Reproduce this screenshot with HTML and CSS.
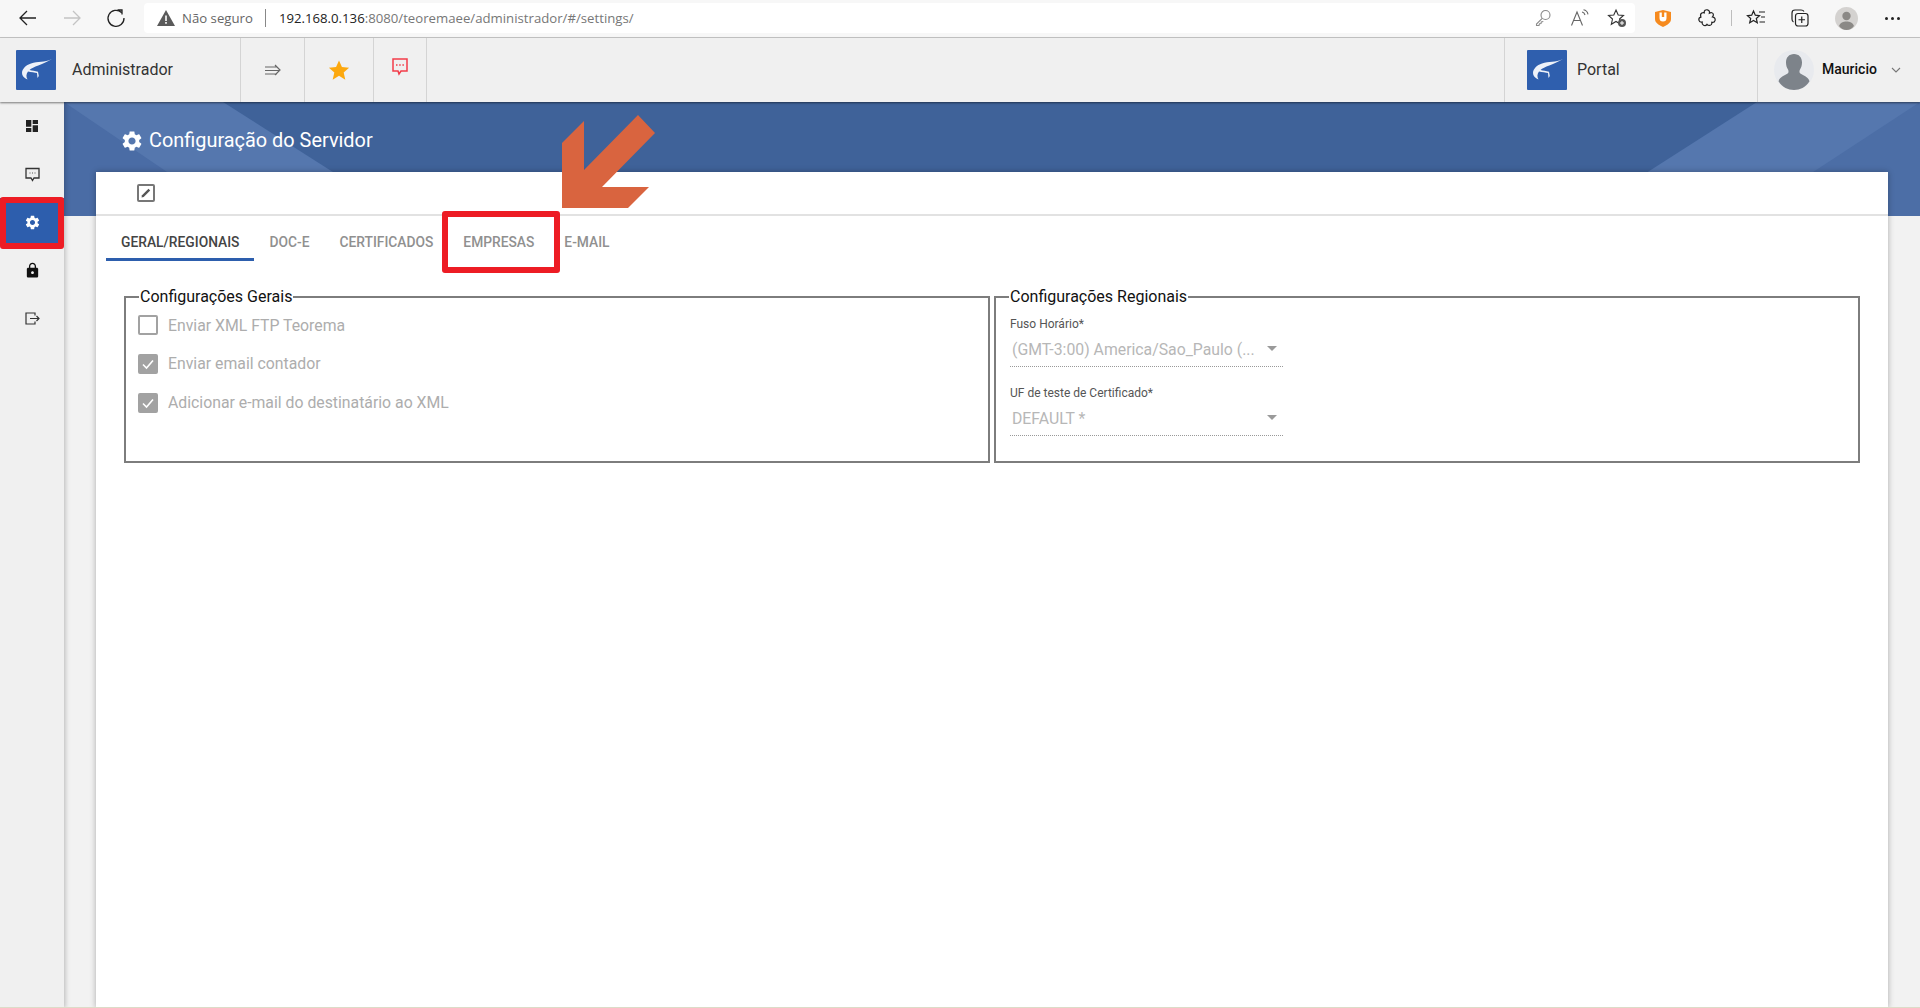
FILE: index.html
```html
<!DOCTYPE html>
<html lang="pt-BR">
<head>
<meta charset="utf-8">
<title>Configuração do Servidor</title>
<link rel="stylesheet" href="styles.css">
</head>
<body>
<svg class="defs" width="0" height="0" aria-hidden="true">
  <symbol id="logo" viewBox="0 0 40 40">
    <rect width="40" height="40" rx="1" fill="#2f5fae"/>
    <path d="M36 9C28 13 22 11 15 13.500C10 15 6 19 6 23C6 26 8 28 11.500 29.500C10 27 10 24 12 21.500C15 22 19 22.500 21 23L21.500 28L22.800 26L22 21.800C19 21 16 20.500 13.500 20C17 16.500 26 15 36 9Z" fill="#fff" opacity=".92"/>
  </symbol>
  <symbol id="gear" viewBox="0 0 24 24">
    <path d="M19.140 12.940c.04-.3.06-.61.06-.94 0-.32-.02-.64-.07-.94l2.030-1.580c.18-.14.23-.41.12-.61l-1.920-3.320c-.12-.22-.37-.29-.59-.22l-2.390.96c-.5-.38-1.030-.7-1.620-.94l-.36-2.540c-.04-.24-.24-.41-.48-.41h-3.840c-.24 0-.43.17-.47.41l-.36 2.540c-.59.24-1.130.57-1.620.94l-2.390-.96c-.22-.08-.47 0-.59.22L2.740 8.870c-.12.21-.08.47.12.61l2.030 1.580c-.05.3-.09.63-.09.94s.02.64.07.94l-2.030 1.580c-.18.14-.23.41-.12.61l1.920 3.320c.12.22.37.29.59.22l2.390-.96c.5.38 1.030.7 1.620.94l.36 2.540c.05.24.24.41.48.41h3.840c.24 0 .44-.17.47-.41l.36-2.540c.59-.24 1.130-.56 1.620-.94l2.390.96c.22.08.47 0 .59-.22l1.920-3.320c.12-.22.07-.47-.12-.61l-2.010-1.580zM12 15.600c-1.980 0-3.600-1.620-3.600-3.600s1.620-3.600 3.600-3.600 3.600 1.620 3.600 3.600-1.620 3.600-3.600 3.600z" fill="currentColor"/>
  </symbol>
</svg>

<header class="browser">
  <nav class="browser-nav">
    <span class="bbtn"><svg width="20" height="20" viewBox="0 0 20 20" fill="none" stroke="#222" stroke-width="1.300"><path d="M18 10H2M9 3l-7 7 7 7"/></svg></span>
    <span class="bbtn"><svg width="20" height="20" viewBox="0 0 20 20" fill="none" stroke="#c4c4c4" stroke-width="1.300"><path d="M2 10h16M11 3l7 7-7 7"/></svg></span>
    <span class="bbtn"><svg width="20" height="20" viewBox="0 0 20 20" fill="none" stroke="#222" stroke-width="1.300"><path d="M15.500 4.500A8 8 0 1 0 18 10M11.500 2h4.500v4.500"/></svg></span>
  </nav>
  <div class="address">
    <svg class="warn" width="18" height="16" viewBox="0 0 18 16"><path d="M9 0l9 16H0z" fill="#5a5a5a"/><path d="M8.200 5.500h1.600v5.500H8.200zM8.200 12h1.600v1.700H8.200z" fill="#fff"/></svg>
    <span class="insecure">Não seguro</span>
    <span class="addr-sep"></span>
    <span class="url"><b>192.168.0.136</b>:8080/teoremaee/administrador/#/settings/</span>
    <span class="addr-actions">
      <span class="abtn"><svg width="18" height="18" viewBox="0 0 18 18" fill="none" stroke="#8a8a8a" stroke-width="1.100"><circle cx="11.500" cy="6" r="4.500"/><path d="M8.200 9.300L2.500 15v1.500h2.500l.5-1.800 1.500-.2.300-1.500 2-.5"/></svg></span>
      <span class="abtn"><svg width="20" height="18" viewBox="0 0 20 18" fill="none" stroke="#666" stroke-width="1.100"><path d="M1.500 16.500L7 3l5.500 13.500M3.500 11.500h7"/><path d="M12 3c1.500.3 2.500 1.300 3 3M13.500.8c2.500.5 4 2 4.500 4.500"/></svg></span>
      <span class="abtn"><svg width="20" height="20" viewBox="0 0 20 20"><path d="M9 2l2.200 5 5.300.5-4 3.500 1.200 5.300L9 13.500l-4.700 2.800 1.200-5.300-4-3.500 5.300-.5z" fill="none" stroke="#333" stroke-width="1.100"/><circle cx="15" cy="15" r="4" fill="#555"/><path d="M13 15h4M15 13v4" stroke="#fff" stroke-width="1"/></svg></span>
    </span>
  </div>
  <div class="browser-tools">
    <span class="bbtn"><svg width="18" height="18" viewBox="0 0 18 18"><path d="M1 3l8-2 8 2v7c0 4-4 6-8 8-4-2-8-4-8-8z" fill="#f68a1e"/><path d="M5.500 3.500h2.300v4.500h2.400V3.500h2.300V9a3.500 3.500 0 0 1-7 0z" fill="#fff"/></svg></span>
    <span class="bbtn"><svg width="20" height="20" viewBox="0 0 20 20" fill="none" stroke="#222" stroke-width="1.200"><path d="M7.300 4.800C6.800 2.500 8.800 1.500 10.300 1.800c1.500.3 2.600 1.600 2.100 3.300 1.600-.8 3.500-.4 3.900 1.100.3 1.200-.1 2-.8 2.700 2 .4 3 1.900 2.600 3.400-.4 1.600-1.800 2.300-3.300 2 .3 1.800-.7 3-2.200 3.100-1.200.1-2-.4-2.600-1.100-.8 1.100-2.300 1.500-3.500.9-1.200-.6-1.600-1.800-1.300-3.100-1.600.3-3-.4-3.300-1.900-.3-1.500.5-2.700 2-3.100C3.300 7.500 3.500 5.800 4.800 5c.8-.4 1.700-.4 2.500-.2z"/></svg></span>
    <span class="tool-sep"></span>
    <span class="bbtn"><svg width="20" height="20" viewBox="0 0 20 20" fill="none" stroke="#222" stroke-width="1.200"><path d="M7.500 3l1.800 4.200 4.200.4-3.200 2.900 1 4.300-3.800-2.300-3.800 2.300 1-4.300L1.500 7.600l4.200-.4z"/><path d="M13 4h6M15 9h4M13.500 14H19"/></svg></span>
    <span class="bbtn"><svg width="20" height="20" viewBox="0 0 20 20" fill="none" stroke="#222" stroke-width="1.200"><rect x="5.500" y="5.500" width="12.500" height="12.500" rx="2.500"/><path d="M11.750 8.500v6.500M8.500 11.750H15M14 3.500c-.5-1-1.500-1.500-3-1.500H5C3 2 2 3 2 5v6c0 1.500.5 2.500 1.500 3"/></svg></span>
    <span class="bbtn profile"><svg width="23" height="23" viewBox="0 0 23 23"><circle cx="11.500" cy="11.500" r="11.500" fill="#d4d2d0"/><circle cx="11.500" cy="9" r="4.200" fill="#8b8986"/><path d="M4 19c1.500-3.500 4-4.500 7.500-4.500s6 1 7.500 4.500c-2 2.500-4.500 4-7.500 4S6 21.500 4 19z" fill="#8b8986"/></svg></span>
    <span class="bbtn dots"><i></i><i></i><i></i></span>
  </div>
</header>

<header class="appbar">
  <div class="brand">
    <svg class="logo" width="40" height="40"><use href="#logo"/></svg>
    <span>Administrador</span>
  </div>
  <div class="cell cell-menu"><svg width="16" height="12" viewBox="0 0 16 12" fill="none" stroke="#666" stroke-width="1.200"><path d="M0 3h12M0 6.500h14M0 10h12M10 1l5 5-5 5"/></svg></div>
  <div class="cell cell-star"><svg width="22" height="22" viewBox="0 0 24 24"><path d="M12 1.500l3.200 7.300 7.800.7-5.900 5.200 1.800 7.800L12 18.300l-6.900 4.200 1.800-7.800L1 9.500l7.800-.7z" fill="#fca80e"/></svg></div>
  <div class="cell cell-chat"><svg width="16" height="20" viewBox="0 0 16 20" fill="none"><path d="M1 1h14v12H9l-2 3-1-3H1z" stroke="#f23c4a" stroke-width="1.500"/><path d="M4 7h1.500M7.200 7h1.500M10.400 7h1.500" stroke="#f23c4a" stroke-width="1.500"/></svg></div>
  <div class="spacer"></div>
  <div class="portal">
    <svg class="logo" width="40" height="40"><use href="#logo"/></svg>
    <span>Portal</span>
  </div>
  <div class="user">
    <svg class="avatar" width="40" height="40" viewBox="0 0 40 40"><circle cx="20" cy="20" r="20" fill="#e8eaee"/><path d="M20 4c5 0 8 3.500 8 8.500 0 3-.8 5-2 7-.7 1.200-.7 3 0 3.800 3 2.500 8 3 9.500 8C31.500 37.500 26 40 20 40S8.500 37.500 4.500 31.300c1.500-5 6.500-5.500 9.500-8 .7-.8.7-2.600 0-3.800-1.200-2-2-4-2-7C12 7.500 15 4 20 4z" fill="#7d838a"/></svg>
    <span class="user-name">Mauricio</span>
    <svg class="chev" width="10" height="6" viewBox="0 0 10 6" fill="none" stroke="#777" stroke-width="1.100"><path d="M1 1l4 4 4-4"/></svg>
  </div>
</header>

<div class="app">
  <aside class="sidebar">
    <a class="side-item"><svg width="16" height="16" viewBox="0 0 24 24"><path d="M3 13h8V3H3v10zm0 8h8v-6H3v6zm10 0h8V11h-8v10zm0-18v6h8V3h-8z" fill="#222"/></svg></a>
    <a class="side-item"><svg width="15" height="15" viewBox="0 0 15 15" fill="none"><path d="M1 1.500h13v9.500H9l-1.500 2.500L6 11H1z" stroke="#333" stroke-width="1.300"/><path d="M4.500 6h1M7 6h1M9.500 6h1" stroke="#555" stroke-width="1.100"/></svg></a>
    <a class="side-item active"><svg width="17" height="17"><use href="#gear"/></svg></a>
    <a class="side-item"><svg width="17" height="17" viewBox="0 0 24 24"><path d="M18 8h-1V6c0-2.760-2.240-5-5-5S7 3.240 7 6v2H6c-1.100 0-2 .9-2 2v10c0 1.100.9 2 2 2h12c1.100 0 2-.9 2-2V10c0-1.100-.9-2-2-2zm-6 9c-1.100 0-2-.9-2-2s.9-2 2-2 2 .9 2 2-.9 2-2 2zm3.100-9H8.900V6c0-1.710 1.390-3.100 3.100-3.100 1.710 0 3.100 1.390 3.100 3.100v2z" fill="#111"/></svg></a>
    <a class="side-item"><svg width="15" height="13" viewBox="0 0 15 13" fill="none" stroke="#333" stroke-width="1.200"><path d="M10 3.500V1H1v11h9V9.500M5 6.500h9M11.500 4l2.500 2.500L11.500 9"/></svg></a>
  </aside>

  <main class="content">
    <section class="banner">
      <svg class="banner-art" viewBox="0 0 1856 114" preserveAspectRatio="none" aria-hidden="true">
        <polygon points="0,0 159,0 338,114 0,114" fill="#5577ae"/>
        <polygon points="0,0 0,114 168,114" fill="#4a6ca5"/>
        <polygon points="1693,0 1856,0 1856,114 1515,114" fill="#5577ae"/>
        <polygon points="1856,0 1856,114 1682,114" fill="#4c6ea6"/>
      </svg>
      <h1 class="page-title"><svg width="24" height="24"><use href="#gear"/></svg>Configuração do Servidor</h1>
    </section>

    <section class="card">
      <div class="card-toolbar">
        <span class="edit-btn"><svg width="12" height="12" viewBox="0 0 12 12"><path d="M1.500 10.500l.5-2.200L8.500 1.800l1.700 1.700-6.500 6.500z" fill="#555"/></svg></span>
      </div>
      <div class="tabs">
        <span class="tab active">GERAL/REGIONAIS</span>
        <span class="tab">DOC-E</span>
        <span class="tab">CERTIFICADOS</span>
        <span class="tab">EMPRESAS</span>
        <span class="tab">E-MAIL</span>
      </div>
      <div class="panels">
        <fieldset class="panel panel-general">
          <legend>Configurações Gerais</legend>
          <label class="check"><span class="box"></span>Enviar XML FTP Teorema</label>
          <label class="check"><span class="box on"><svg width="14" height="12" viewBox="0 0 14 12" fill="none" stroke="#fff" stroke-width="1.600"><path d="M2 6.500l3.500 3.500L12 2.500"/></svg></span>Enviar email contador</label>
          <label class="check"><span class="box on"><svg width="14" height="12" viewBox="0 0 14 12" fill="none" stroke="#fff" stroke-width="1.600"><path d="M2 6.500l3.500 3.500L12 2.500"/></svg></span>Adicionar e-mail do destinatário ao XML</label>
        </fieldset>
        <fieldset class="panel panel-regional">
          <legend>Configurações Regionais</legend>
          <div class="field">
            <span class="field-label">Fuso Horário*</span>
            <div class="select"><span>(GMT-3:00) America/Sao_Paulo (...</span><i class="caret"></i></div>
          </div>
          <div class="field">
            <span class="field-label">UF de teste de Certificado*</span>
            <div class="select"><span>DEFAULT *</span><i class="caret"></i></div>
          </div>
        </fieldset>
      </div>
    </section>
  </main>
</div>
<div class="bottom-edge"></div>

<div class="mark mark-side"></div>
<div class="mark mark-tab"></div>
<svg class="arrow" width="94" height="94" viewBox="0 0 94 94"><polygon points="22,6 0,28 0,93 66,93 87,72 40,72 93,18 76,0 22,55" fill="#d9643f"/></svg>
</body>
</html>
```

FILE: styles.css
```css
* { box-sizing: border-box; }
html, body { margin: 0; height: 100%; }
body {
  position: relative;
  width: 1920px;
  height: 1008px;
  overflow: hidden;
  display: flex;
  flex-direction: column;
  font-family: Roboto, "Liberation Sans", sans-serif;
  background: #fff;
}
.defs { position: absolute; }

/* browser chrome */
.browser {
  flex: 0 0 38px;
  display: flex;
  align-items: flex-start;
  padding: 3px 6px 0;
  background: #f7f7f7;
  border-bottom: 1px solid #c6c6c6;
}
.browser-nav, .browser-tools { display: flex; align-items: center; height: 30px; }
.bbtn { width: 44px; height: 30px; display: flex; align-items: center; justify-content: center; }
.address {
  flex: 1;
  height: 30px;
  margin: 0 6px;
  display: flex;
  align-items: center;
  padding-left: 13px;
  background: #fff;
  border-radius: 4px;
  font-family: "Open Sans", "Noto Sans", sans-serif;
  font-size: 13.200px;
}
.insecure { margin-left: 7px; color: #666; }
.addr-sep { width: 1px; height: 18px; margin: 0 13px 0 12px; background: #888; }
.url { color: #777; }
.url b { font-weight: 400; color: #222; }
.addr-actions { margin-left: auto; display: flex; align-items: center; }
.abtn { width: 37px; height: 30px; display: flex; align-items: center; justify-content: center; }
.tool-sep { width: 1px; height: 16px; margin: 0 2px; background: #bdbdbd; }
.profile { margin-left: 2px; }
.dots { margin-left: 2px; gap: 3px; }
.dots i { width: 3px; height: 3px; border-radius: 50%; background: #222; }

/* application bar */
.appbar {
  flex: 0 0 64px;
  display: flex;
  align-items: stretch;
  background: #f0f0f0;
  color: #333;
  font-size: 16px;
  position: relative;
  z-index: 2;
  box-shadow: 0 1px 2px rgba(0, 0, 0, .5);
}
.brand, .portal { display: flex; align-items: center; border-right: 1px solid #d4d4d4; }
.brand { width: 241px; padding-left: 16px; }
.brand span { margin: 0 0 2px 16px; }
.logo { display: block; flex: none; }
.cell { display: flex; align-items: center; justify-content: center; border-right: 1px solid #d4d4d4; }
.cell-menu { width: 64px; }
.cell-star { width: 69px; }
.cell-chat { width: 53px; padding-bottom: 4px; }
.spacer { flex: 1; border-right: 1px solid #d4d4d4; }
.portal { flex: none; width: 253px; padding-left: 22px; }
.portal span { margin: 0 0 2px 10px; }
.user { flex: none; width: 162px; display: flex; align-items: center; padding-left: 16px; }
.user-name { margin: 0 0 2px 8px; font-size: 14px; font-weight: 500; color: #111; }
.chev { margin-left: 14px; }

/* body */
.app { flex: 1; display: flex; min-height: 0; }
.sidebar {
  flex: 0 0 64px;
  background: #f0f0f0;
  position: relative;
  z-index: 1;
  box-shadow: 1px 0 5px rgba(0, 0, 0, .25);
}
.side-item { height: 48px; display: flex; align-items: center; justify-content: center; color: #333; }
.side-item.active { background: #2d5ead; color: #fff; }

.content {
  flex: 1;
  display: flex;
  flex-direction: column;
  min-width: 0;
  background: #f2f2f2;
}
.banner {
  flex: 0 0 114px;
  position: relative;
  background: #3f6299;
}
.banner-art { position: absolute; inset: 0; width: 100%; height: 100%; display: block; }
.page-title {
  position: relative;
  margin: 0;
  padding: 27px 0 0 56px;
  display: flex;
  align-items: center;
  gap: 5px;
  color: #fff;
  font-size: 19.900px;
  font-weight: 400;
  line-height: 24px;
}
.card {
  flex: 1;
  margin: -44px 32px 0;
  position: relative;
  background: #fff;
  box-shadow: 0 0 6px rgba(0, 0, 0, .3);
}
.card-toolbar {
  height: 44px;
  display: flex;
  align-items: center;
  padding-left: 41px;
  border-bottom: 2px solid #e2e2e2;
}
.edit-btn {
  width: 18px;
  height: 18px;
  display: flex;
  align-items: center;
  justify-content: center;
  border: 2px solid #777;
  border-radius: 2px;
}
.tabs { display: flex; padding-left: 10px; height: 45px; }
.tab {
  padding: 9px 15px 0;
  display: flex;
  align-items: center;
  font-size: 13.800px;
  font-weight: 500;
  color: #909090;
  border-bottom: 3px solid transparent;
}
.tab.active { color: #444; border-bottom-color: #2d5ead; }

.panels { display: flex; gap: 4px; padding: 26px 28px 0; }
.panel {
  margin: 0;
  min-width: 0;
  height: 176px;
  padding: 0;
  border: 2px solid #7d7d7d;
}
.panel legend {
  padding: 0 1px;
  font-size: 16px;
  line-height: 19px;
  color: #111;
}
.panel-general { width: 866px; padding: 9px 0 0 12px; }
.panel-general legend { margin-left: 1px; }
.panel-regional { flex: 1; padding: 11px 0 0 14px; }
.panel-regional legend { margin-left: -1px; }

.check {
  display: flex;
  align-items: center;
  height: 20px;
  margin-bottom: 18.800px;
  font-size: 15.800px;
  color: #adadad;
}
.box {
  flex: none;
  width: 20px;
  height: 20px;
  margin-right: 10px;
  display: flex;
  align-items: center;
  justify-content: center;
  border: 2px solid #a2a2a2;
  border-radius: 2px;
}
.box.on { background: #a2a2a2; }

.field { width: 273px; height: 69px; }
.field-label { display: block; font-size: 12px; line-height: 14px; color: #555; }
.select {
  height: 33px;
  margin-top: 3px;
  padding: 0 6px 2px 2px;
  display: flex;
  align-items: center;
  justify-content: space-between;
  font-size: 15.800px;
  color: #b7b7b7;
  border-bottom: 1px dotted #999;
}
.caret {
  margin-top: -2px;
  border-left: 5px solid transparent;
  border-right: 5px solid transparent;
  border-top: 5px solid #9a9a9a;
}

.bottom-edge { position: absolute; left: 0; right: 0; bottom: 0; height: 1px; background: #dcdcc8; z-index: 3; }

/* annotations drawn over the screenshot */
.mark {
  position: absolute;
  border: 6px solid #ed1c24;
  border-radius: 3px;
  z-index: 5;
}
.mark-side { left: 0; top: 197px; width: 64px; height: 52px; }
.mark-tab { left: 442px; top: 211px; width: 118px; height: 62px; }
.arrow { position: absolute; left: 562px; top: 115px; z-index: 4; }
```
